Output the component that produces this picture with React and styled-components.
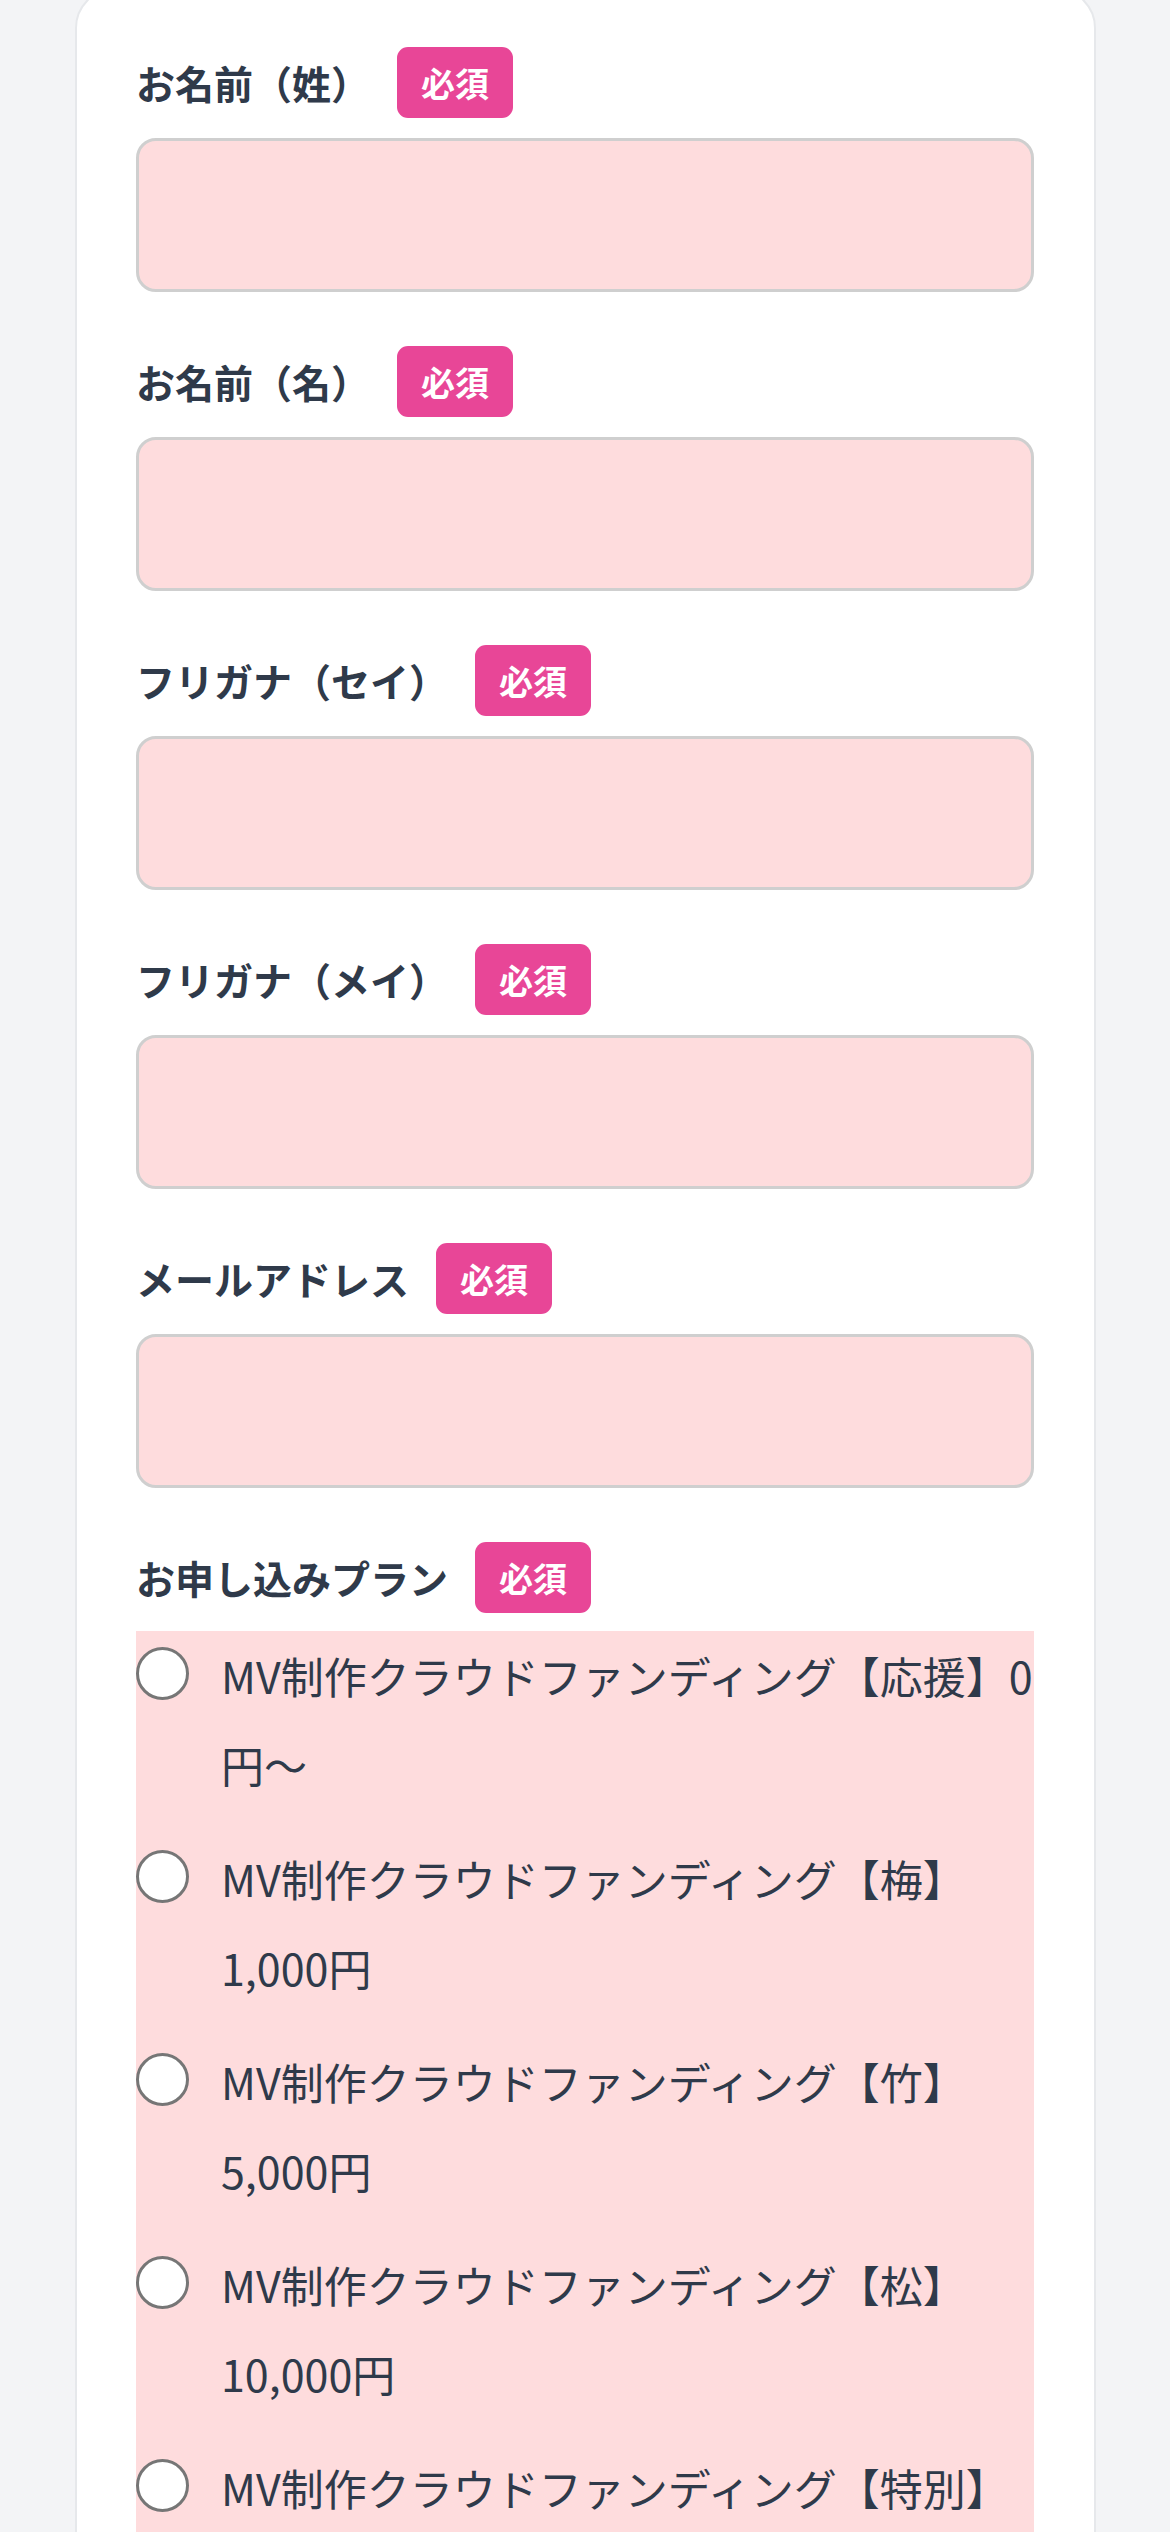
import React from "react";
import styled, { createGlobalStyle } from "styled-components";

const Global = createGlobalStyle`
  html, body { margin: 0; padding: 0; background: #f3f4f6; }
  body { font-family: "Noto Sans CJK JP", "Noto Sans", sans-serif; color: #2f3a4a; }
  * { box-sizing: border-box; }
`;

const Page = styled.div`
  width: 1170px;
  padding: 0 74px 80px 75px;
  overflow: hidden;
`;

const Card = styled.form`
  margin-top: -12px;
  background: #ffffff;
  border: 2px solid #e6e8eb;
  border-radius: 40px;
  padding: 57px 60px 60px 59px;
  display: flex;
  flex-direction: column;
  gap: 54px;
`;

const Field = styled.div`
  display: flex;
  flex-direction: column;
  gap: ${(p) => (p.$tight ? "18px" : "20px")};
`;

const LabelRow = styled.div`
  display: flex;
  align-items: center;
  gap: 27px;
  height: 71px;
`;

const Label = styled.label`
  font-size: 39px;
  font-weight: 700;
  line-height: 1.4;
  color: #2f3a4a;
  white-space: nowrap;
`;

const Badge = styled.span`
  display: inline-flex;
  align-items: center;
  justify-content: center;
  height: 71px;
  padding: 0 24px;
  border-radius: 11px;
  background: #e84697;
  color: #ffffff;
  font-size: 34px;
  font-weight: 700;
  line-height: 1;
`;

const TextInput = styled.input`
  display: block;
  width: 100%;
  height: 154px;
  margin: 0;
  background: #fedcdd;
  border: 3px solid #cfcfcf;
  border-radius: 20px;
  font-family: inherit;
  font-size: 43px;
  padding: 0 24px;
  outline: none;
`;

const RadioGroup = styled.div`
  background: #fedcdd;
  display: flex;
  flex-direction: column;
  gap: 25px;
`;

const Option = styled.label`
  display: flex;
  align-items: flex-start;
  gap: 32px;
`;

const Radio = styled.input`
  appearance: none;
  -webkit-appearance: none;
  flex-shrink: 0;
  width: 53px;
  height: 53px;
  margin: 16px 0 0 0;
  border: 3px solid #767676;
  border-radius: 50%;
  background: #ffffff;
`;

const OptionText = styled.span`
  flex: 1;
  min-width: 0;
  font-size: 43px;
  font-weight: 400;
  line-height: 89px;
  color: #2f3a4a;
`;

const fields = [
  { label: "お名前（姓）", name: "last" },
  { label: "お名前（名）", name: "first" },
  { label: "フリガナ（セイ）", name: "last_kana" },
  { label: "フリガナ（メイ）", name: "first_kana" },
  { label: "メールアドレス", name: "email" },
];

const plans = [
  "MV制作クラウドファンディング【応援】0円〜",
  "MV制作クラウドファンディング【梅】1,000円",
  "MV制作クラウドファンディング【竹】5,000円",
  "MV制作クラウドファンディング【松】10,000円",
  "MV制作クラウドファンディング【特別】50,000円",
];

export default function App() {
  return (
    <>
      <Global />
      <Page>
        <Card onSubmit={(e) => e.preventDefault()}>
          {fields.map((f) => (
            <Field key={f.name}>
              <LabelRow>
                <Label htmlFor={f.name}>{f.label}</Label>
                <Badge>必須</Badge>
              </LabelRow>
              <TextInput id={f.name} name={f.name} type="text" />
            </Field>
          ))}
          <Field $tight>
            <LabelRow>
              <Label>お申し込みプラン</Label>
              <Badge>必須</Badge>
            </LabelRow>
            <RadioGroup>
              {plans.map((p) => (
                <Option key={p}>
                  <Radio type="radio" name="plan" value={p} />
                  <OptionText>{p}</OptionText>
                </Option>
              ))}
            </RadioGroup>
          </Field>
        </Card>
      </Page>
    </>
  );
}
